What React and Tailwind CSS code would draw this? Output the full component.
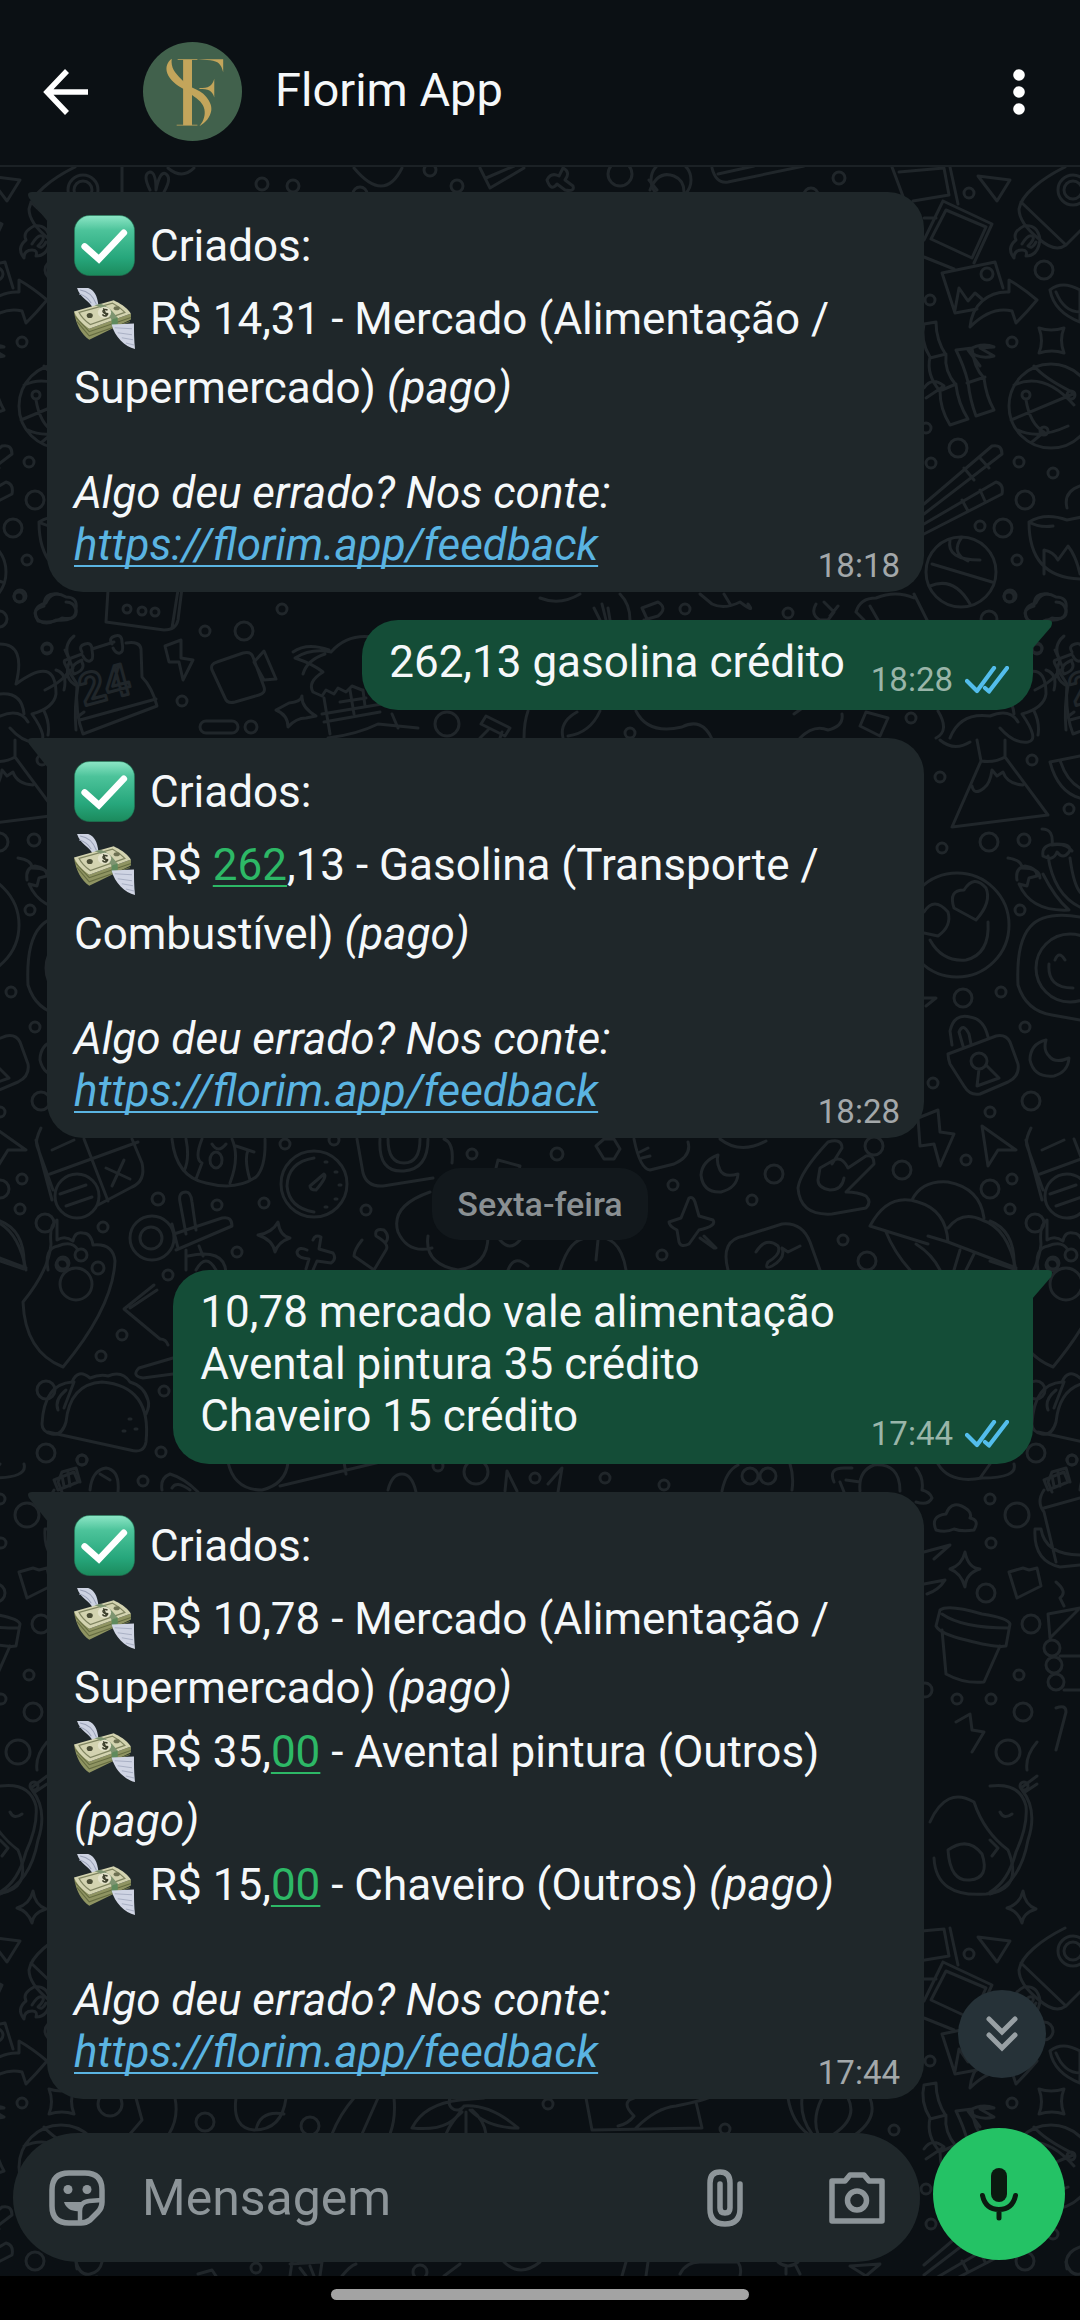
import { useState } from 'react';

// small bubbles scattered over the wallpaper: [x, y, r]
const DOTS = [
  [262, 184, 6], [293, 186, 6], [360, 194, 7], [430, 170, 6], [457, 186, 6], [620, 174, 12], [671, 180, 20], [811, 195, 7], [839, 178, 6],
  [969, 193, 5], [1044, 270, 9], [930, 300, 5], [1012, 342, 5], [926, 428, 5], [958, 448, 9], [931, 463, 5], [1019, 462, 5],
  [1053, 473, 5], [1025, 500, 9], [980, 526, 5], [1003, 528, 9], [1017, 560, 5], [1009, 597, 5], [989, 619, 8], [685, 609, 5],
  [788, 613, 5], [1037, 648, 5], [630, 733, 5], [911, 718, 5], [20, 596, 6], [47, 649, 5], [282, 609, 5], [205, 631, 5],
  [244, 631, 9], [182, 701, 5], [251, 727, 6], [447, 724, 12], [940, 777, 5], [1032, 760, 5], [1069, 809, 5], [989, 842, 9],
  [1024, 840, 6], [942, 848, 5], [1020, 910, 5], [963, 998, 9], [1001, 992, 5], [1025, 1027, 5], [933, 1083, 5], [1031, 1101, 9],
  [990, 1112, 5], [874, 1146, 9], [966, 1160, 5], [902, 1170, 9], [1012, 1179, 5], [990, 1189, 9], [1010, 1209, 5], [1035, 1223, 9],
  [673, 1185, 5], [774, 1174, 9], [752, 1200, 5], [843, 1240, 5], [662, 1255, 5], [867, 1261, 9], [557, 1154, 6],
  [158, 1199, 6], [103, 1227, 5], [217, 1205, 5], [264, 1203, 5], [237, 1252, 5], [285, 1144, 5], [334, 1140, 5], [366, 1210, 5],
  [168, 1275, 5], [472, 1154, 5], [122, 1335, 5], [101, 1356, 5], [164, 1391, 5], [161, 1452, 5], [82, 1460, 5], [143, 1481, 5],
  [46, 1453, 9], [476, 1472, 12], [438, 1466, 5], [535, 1478, 5], [605, 1478, 5], [664, 1485, 5], [990, 1499, 5], [1017, 1515, 12],
  [991, 1543, 5], [986, 1593, 9], [1031, 1624, 9], [1019, 1675, 5], [925, 1690, 7], [957, 1699, 5], [991, 1699, 5], [1023, 1712, 9],
  [1036, 1390, 9], [1072, 1460, 5], [1008, 1752, 12], [205, 2122, 9], [310, 2126, 9], [110, 2104, 12], [548, 2104, 5], [725, 2129, 5],
  [894, 2130, 5], [256, 2268, 5], [420, 2272, 7],
];

const DOODLES = [
  // photos
  'M892 167l12 32M899 172l45-4 5 27-36 6M950 167l8 37M924 218h12M943 201l49 23-18 39M924 240l19-39M924 257l30 12M946 210l40 17-14 31-41-19z',
  // framed picture
  'M955 313l-13-40 53-11 8 26M955 313l22-4M955 310l4-22 9 13 7-8 7 6M981 274a6 6 0 1 0 12 0a6 6 0 1 0-12 0',
  // curved arrow
  'M970 327c2-22 18-36 39-35v-12q14 8 28 20q-10 12-21 23l-4-12c-16-4-30 4-42 16z',
  // rocket
  'M1065 167c-24 12-44 28-46 42q0 14 20 30q16 14 27 6l46-46V167M1021 202l45 43M1058 190a15 15 0 1 0 30 0a15 15 0 1 0-30 0M1064 190a9 9 0 1 0 18 0a9 9 0 1 0-18 0',
  'M1014 258q-8-10 2-18q-4-8 8-14q14-2 16 14q-2 16-14 16q2-6-4-6q-8 0-8 8M1022 244q6-10 10-8t-4 10q4 4 8-4',
  // paper plane
  'M978 176l32 4-13 21z',
  // coffee bean
  'M1050 290q12-10 30 0v32q-26-10-30-32M1056 292q8 20 24 20',
  // bamboo
  'M924 324l12-2q0 18 10 33q-2 16 10 30q2 18 12 34l-18 6q-10-16-10-34q-14-16-10-34q-10-16-6-33M930 358l16-4M942 390l14-6M956 350q8 16 12 32q2 18 8 34l18-6q-8-14-10-32q-10-10-12-30zM967 383l18-6M968 350q14-8 26-3l-14 1 14 8q-16 4-26-6l12 16M924 388q8-12 20-2l-18 12',
  // four-point stars
  'M1039 328q12 4 25 0q-5 12 0 25q-12-4-25 0q5-12 0-25zM289 703q12-1 13-7q-1 11 14 20l-10 2q-10 0-18 9q0-12-12-17zM965 1552q3 16 15 17q-14 4-15 18q-4-14-15-18q12-4 15-17zM278 1222q2 14 12 16q-12 4-15 14q-2-12-17-17q14-2 20-13zM33 1891q2 14 13 18q-13 4-14 14q-4-12-15-15q13-4 16-17z',
  // ball
  'M1009 406a42 42 0 1 0 84 0a42 42 0 1 0-84 0M1014 385q30-14 60 20M1026 400q4 24 18 32M1011 420l62-26M1034 366q10 12 38 26M1018 430q20 10 50-4M1044 432l-12 10M1022 395a4 4 0 1 0 8 0a4 4 0 1 0-8 0M1040 431a4 4 0 1 0 8 0a4 4 0 1 0-8 0M1067 395a4 4 0 1 0 8 0a4 4 0 1 0-8 0',
  // matches
  'M924 504l68-58q10-2 10 8l-78 60M924 524l72-42q8 2 6 12l-78 40M964 468l10 12M980 458l9 10M962 500l6 11M980 490l5 11',
  // basketball
  'M926 572a35 35 0 1 0 70 0a35 35 0 1 0-70 0M932 564l60 18M950 540q-4 20 30 20M930 586q24-10 40 18M962 537q-12 16 6 24',
  // bowl
  'M1029 522q16-10 38-2l20-4M1029 522q0 56 52 57M1029 522q10 6 24 4M1067 508q-4-16 13-22M1044 574l0-24q10 2 14 10l10-14q8 10 12 28',
  // cloud
  'M1028 621q-8-14 8-18q6-14 20-6q12 0 10 12q2 12-14 9q-10 6-24 3z',
  // chat keyboard
  'M108 590l-2 32 58 8q12 0 14-10l4-32M172 628l6-38M123 609a4 4 0 1 0 8 0a4 4 0 1 0-8 0M138 611a4 4 0 1 0 8 0a4 4 0 1 0-8 0M151 612a4 4 0 1 0 8 0a4 4 0 1 0-8 0',
  // cloud on the left
  'M38 620q-8-10 6-14q0-14 14-12M38 620q8 6 18 0q20 2 20-10q-2-8-10-8M0 644q26 0 16 40q40-30 40 10q-2 14-24 20q18 26 6 28q-14 2-28-14M0 694q22-2 24 20',
  // calendar
  'M66 660l16-6M92 649l22-7M126 643q14-2 15 6l1 28q10 10 15 29l-74 28q-8-20-6-50q-8-12-12-20q-2-4 1-4M80 720l76-21M82 652q-4-6 3-8t7 6q2 10-2 11t-7-5M112 644q-4-6 3-8t7 6q2 10-2 11t-7-5',
  // bolt
  'M165 646l16-6 0 18 12 2-10 20-4-18-10 0z',
  // video camera
  'M212 670q-2-6 5-8l26-9q8-2 10 4l11 30q2 6-5 8l-24 7q-8 2-10-4zM254 662l10-11 12 28-12 1z',
  // hut and palm
  'M313 692q-6-10 10-20q-10-8-28-14q16-10 36-6q18-20 46-14M293 652q14-10 36-2M303 674q4-14 22-20M313 692l9 4 4-6 8 4 4-6 8 4 6-6 10 4M324 698l6 36M324 722l56-10M322 714l60-10M350 690l4 24M340 702l26-4M328 738q30-4 50-14l40 4M392 714l6 14M363 690l2 16',
  // capsule
  'M206 721h26a6 6 0 0 1 0 12h-26a6 6 0 0 1 0-12z',
  // pipe
  'M486 716l24 12-5 8-24-12zM488 730l-8 8M500 738l2-6M524 738q0-16 4-27',
  // mushrooms and ribbons under the first reply
  'M540 598q20 8 40-4M620 594q10 10 10 26M602 604l4 16M608 608l2 12M594 608l6 12M642 608l12 26M642 608l16-6q10 6 0 14l-14 4M700 594l12 10q12 6 28-2q16 12 8 2M730 604l-6-10M816 604q-6 10 4 16l8 0 6-8-10-10M830 616l8-10M856 612q4-14 20-14q20-8 38 0M914 594l14 28M856 612l8 8M870 606l8 14',
  'M563 738q-4-16 14-26M600 711q-10 22-32 25M636 711q12 24 46 16q20-10 30 12M794 714l14-10M800 738q14-14 28-8q16-4 14-16M860 726l6-14 22 6-8 18zM938 711q12 20-2 27M950 738q10-26 40-22q20-8 28 6M1034 711q6 12 4 24M1035 690q20-10 24-20M1055 650l8 18-8 10M1074 712l-8 6',
  // neon blossoms on the right
  'M1064 636q-12 10-4 24q-8 20 8 26q-4 20-2 44M1046 670q12 4 8 20M1072 660q-14 6-8 14q12-4 8-12',
  // volcano
  'M977 740l4 21-29 66 96-12-43-58 0-17M981 761q14 2 24-4M972 786q2 10 12 2q6-4 8-18l5 6 6-4q4 12 20 13',
  // balloon tail
  'M940 740q14 12 30 2M1050 762q8 30 30 36M1060 760q6 20 20 28M1050 762l30-6',
  // cherries
  'M1042 829q12 0 10 16q14-2 20 6M1043 856q-2-12 14-12t12 8q-6 8-12 0q-4 10-14 4M1048 856q6 40 34 52M1070 858q4 30 12 36M1008 858q14 2 14 10q18 0 18 10M1017 880q-2-12 8-14q12 2 12 10l-8 2-2 8-8-2q12 28 50 26q-14-12-26-36',
  // heart-eyes
  'M905 925a52 52 0 1 0 104 0a52 52 0 1 0-104 0M976 920l-22-12q-6-18 10-18q10-16 22-2q6 14-10 32zM924 912q10-16 24 0q4 14-10 24l-14-3M930 940q12 22 36 20q24-6 22-38',
  // smiling blob
  'M1080 917q-36-6-50 10t-12 58q8 26 34 30l28 5M1036 968a34 34 0 1 0 68 0a34 34 0 1 0-68 0M1049 964q-2 24 24 24M1055 960q4-10 10 0',
  // lock
  'M952 1045l-2-14q4-18 20-14q14 2 18 20M963 1046l-4-14q4-10 10 2l2 10M948 1054l48-18q10-2 14 6l8 22q2 12-10 18l-28 12q-10 2-16-8l-14-22q-2-6-2-10M971 1061a8 8 0 1 0 16 0a8 8 0 1 0-16 0M979 1069l-2 17 22-8-12-12',
  // moons
  'M1046 1040q-16 4-16 20q4 18 24 16q14-4 15-18q-14 6-20-2q-6-6-3-16zM718 1155q-16 6-17 20q2 18 20 17q16-4 17-18q-14 4-18-4t-2-15z',
  // bolt and cursor
  'M918 1118l20-8 2 22 14 2-14 32-6-22-14 2zM982 1126l34 24-18 0-10 16zM924 998l12 0-10 8',
  // control pad
  'M36 1140l16 60M84 1139l24 62M50 1174l88-32M41 1128q-6 12-4 18l16 44M132 1139l10 24q4 18-10 24l-34 18M106 1168l24 11M124 1160l-12 26M52 1150l22-10M60 1194l26-9M66 1206l26-9M55 1196a22 22 0 1 0 44 0a22 22 0 1 0-44 0',
  // easter egg
  'M172 1139q4 38 34 44q30 8 50-6q10-10 9-38M186 1139q4 20-2 32M202 1139q-8 20 0 24l-6 16M232 1139q8 18-2 44M248 1150q-4 10 2 30M212 1144q6 10 14 0M210 1160a6 8 0 1 0 12 0a6 8 0 1 0-12 0M236 1146l18 6',
  // gauge
  'M281 1184a33 33 0 1 0 66 0a33 33 0 1 0-66 0M314 1158q-26 4-27 28q2 22 27 26M310 1186l14-12q4 2-8 16q-6 0-6-4M325 1162h2M335 1172h2M339 1185h2M335 1199h2M325 1207h2',
  // camera lens
  'M357 1139l6 34q4 14 20 13l50-8M380 1139q-2 34 24 32q24-2 24-32M388 1139q0 24 16 24t16-24M444 1139q10 4 8 24M498 1160l22 6-2 6M498 1160l-2 8',
  // windmill
  'M180 1202q-2-10 6-10q5 0 6 10l4 28M180 1202l6 32M174 1234l48-16q10-2 10 8l-56 24M130 1238a22 22 0 1 1 44 0a22 22 0 1 1-44 0M140 1238a11 11 0 1 0 22 0a11 11 0 1 0-22 0M172 1224l6 24M199 1246l4 10M186 1250v20M188 1256q36-8 38 16M196 1270q10-18 20 0',
  // paw and shield
  'M57 1220q-8 4-6 24q-2 26-28 58q2 50 40 65q50-60 52-106q-2-18-22-16q-2-12-10-12q-8-2-10 8q-8-6-16-1zM57 1263a6 6 0 1 0 12 0a6 6 0 1 0-12 0M75 1255a6 6 0 1 0 12 0a6 6 0 1 0-12 0M92 1268a6 6 0 1 0 12 0a6 6 0 1 0-12 0M60 1284a16 16 0 1 0 32 0a16 16 0 1 0-32 0M0 1221q26 10 24 48l-24-8',
  // cup
  'M154 1285l-30 24 36 30q6 0 8 6M130 1308l27-18M173 1358l-34 10q-8 8 4 10l30-4',
  // taco
  'M48 1432l82 18q14 4 16-8q6-56-44-60q-32 2-36 40q-4 14-14 12q-10-2-10-10q2-40 30-42q6-14 18-4q10-4 18-2q14-6 22 6q14 4 18 18q2 6-2 14M66 1390q-12 10-8 20M74 1382l-10 26M129 1419h2M135 1429h2M123 1431h2',
  // plus, bottle and fan near the date
  'M313 1240q2-6 8-3l-2 12 14 4q4 6-2 10l-14-2-4 9M297 1252q2-6 10-2M297 1252q0 6 12 7l-3 10M362 1240q-8 10-8 16l20 14 12-20q4-6-10-14q-2-8 8-6q6 6 2 12M430 1192q-40 14-32 40q10 22 34 16M428 1236q-4 28 30 34q30-4 30-34M508 1270q6-16 20-4M560 1270q10-34 30-32q30-6 36 32M500 1240q10 12 20 0M598 1240l-2 20',
  // pin and tag
  'M669 1222l12-4 8-20q4-2 6 4l4 14 14 4q4 6-14 10l-10 14q-8 4-10-2l-2-12q-8-4-8-8zM704 1236l12 12-2 0-14-10M728 1270q-8-30 16-34l38-12q20-2 28 18l10 28M756 1252q10-16 22-6q4 8-10 16q-4 8 4 4q14-8 10-18l6 4 12-6',
  'M634 1139q6 30 16 31l24-6q18-8 14-22M640 1152l8-4M642 1158l8-2M596 1146l8-7h10l6 10-6 10h-10zM720 1139q20 16 46 2',
  // rocking hand
  'M828 1142q-28 30-30 46q2 28 34 26l34-6q6-6 0-12q-8-4-20-4l28-28q0-10-8-8l-18 12q-6-12-14-8l-14 8-2 12q0 8 12 10q12 0 14-12M828 1142q14-4 14 6l-10 16',
  // parasols
  'M870 1226q18-34 48-24q28 8 30 40l-20-6M870 1226l58 18M912 1200q10-20 36-18q32 6 36 36M948 1228q14-18 34-8q26 8 34 50M886 1232q8 20 24 38M916 1244q16 10 24 26M948 1242l68 26M960 1250l-6 20M974 1254l-8 16',
  'M1038 1270q-4-22 10-24q14-6 20 4M1046 1265a6 6 0 1 0 12 0a6 6 0 1 0-12 0',
  // second row of trinkets
  'M62 1472l14-4 4 14M62 1472l-4 10 4 10M68 1472l2 14M90 1490q2-20 16-22q14 2 12 24M100 1474l10 6M162 1490q-2-12 8-16q14 4 28 18M172 1488q4-8 18 2M228 1462q6 28 34 28q24-6 26-28M280 1486l100-24M344 1462l2 12M388 1490q4-16 14-16t14 18M505 1491l2-20 10 20M558 1492l4-24-14 16',
  'M722 1491q4-20 16-26M790 1464q4 12 2 26M742 1476a8 8 0 1 0 16 0a8 8 0 1 0-16 0M760 1476a8 8 0 1 0 16 0a8 8 0 1 0-16 0M834 1482q-6-14 10-14l8 0M840 1482l4 10M860 1491q-2-20 14-26q26-2 26 26M846 1480l14 2M916 1468q8 10 6 22q8 2 10 8q-4 8-16 4M938 1464q12 20 44 14q36 0 32-14M980 1478l10-14',
  // small cloud, bottle, banana
  'M936 1530q-6-14 10-16q6-16 22-4q4 4 2 8q10 2 4 12q-12 2-20-1q-8 4-18 1zM924 1552l26-7-16 14M924 1584l21-4q-6 10-18 14M1044 1480l20-8 4 10-20 8zM1044 1490q-8 12 0 22l12 50M1052 1476l2 10M1044 1508l36-10M1035 1529h6q4 26 40 26M1035 1529q-2 32 25 38l20-2M1009 1572l14-4 6 2 8-2 4 18-24 12z',
  // flower pot
  'M940 1610q8-6 42 4q26 4 28 10l-4 22q-10 2-40-6q-26-6-30-14zM942 1630l4 44q18 10 38 8l16-36M942 1614q20 14 66 14',
  // crate and logs
  'M1048 1614l32-6-30 30zM1044 1648a8 8 0 1 0 16 0a8 8 0 1 0-16 0M1046 1665a8 8 0 1 0 16 0a8 8 0 1 0-16 0M1048 1682a8 8 0 1 0 16 0a8 8 0 1 0-16 0M1060 1656h20M1064 1690h16M1056 1582q12 10 4 16l4 8M1056 1708q10-4 10 4l-10 38M956 1722l14-8 2 16 12 2-12 20',
  // sleepy pear on both edges
  'M0 1786q30-4 36 20q2 20-10 46q-8 30-26 40M32 1790q16 20 6 50q-8 44-38 54M10 1812q4 8 12 2M47 1776l-16 12M47 1784l-12 8M30 1786a4 4 0 1 0 8 0a4 4 0 1 0-8 0M47 1742q-12 14-10 28M0 1840l8 8-6 8',
  'M930 1822q16-36 44-20q10 30 34 48q16 40-22 44q-50 4-52-36M948 1850q20-14 34 4q8 24-12 26t-22-30',
  // stripes
  'M136 2098l6 22-12 14M175 2098q4 20-6 36M236 2098q-4 30 18 32q28 0 32-32M256 2130q4-20 28-16M354 2098q-14 16-22 36M378 2098l-16 36M394 2098q2 20-4 36M412 2128q12-24 48-28l24-2M412 2128q40 4 50-20M464 2098a8 8 0 1 0 0 8q26-2 54 22q-30 0-48-18M462 2112q-10 8-16 22M466 2112l0 22M472 2110q12 10 14 24',
  'M586 2098l6 32 110-2-6-26M634 2098q-14 4 0 18q-6 8-16 10M636 2128q20-20 40-22q30-6 36-10M788 2098q4 24 20 36M802 2098q-2 20 10 36M822 2098q-10 20-4 36M848 2098q10 20-14 36M870 2098q8 20-14 36',
  // bottom strip
  'M290 2276l2-14M290 2264l32-2-2 14M300 2268l6 8M310 2266l4 10M198 2274l14-4 4 6M76 2262q4 14 14 12t12-12M342 2276q8-10 14-12M622 2276l4-14M646 2276l2-14M680 2274q6-12 20-12h38q4 6 2 14M778 2262q10 8 20 0M786 2268v6M796 2266l4 8M850 2266l30-2-14 12zM444 2276l16-12M504 2262q16 16 36 0',
  // top strip
  'M150 190q-8-16 0-18q6 0 6 18q4-20 10-16q6 4-2 18M168 168q14 12 26 0M354 168q30 36 48 0M480 168l10 20 34-20M486 178l28-12M547 180q4-8 12-4l4-8q8 4 2 12l8 6q2 6-8 4l-8-6q-6 8-10-4zM649 180l8 10M650 190q8-20 24-14q10 4 10 16M712 168q4 16 16 14l76-16M718 174l36-8',
];

function Wallpaper() {
  const tiles = [
    [0, 0], [-990, 0], [990, 0],
    [0, 1761], [-990, 1761], [990, 1761],
  ];

  return (
    <svg className="absolute inset-0 h-full w-full" aria-hidden="true">
      <defs>
        <g id="doodles" fill="none" stroke="#20262a" strokeWidth="3" strokeLinecap="round" strokeLinejoin="round">
          {DOODLES.map((d, i) => <path key={i} d={d} />)}
          {DOTS.map(([x, y, r]) => <circle key={`${x}-${y}`} cx={x} cy={y} r={r} />)}
          <text x="84" y="706" fontSize="44" fontWeight="700" fontFamily="Roboto" transform="rotate(-15 84 706)">24</text>
        </g>
      </defs>
      <g transform="translate(0 -167)">
        {tiles.map(([x, y]) => <use key={`${x}/${y}`} href="#doodles" x={x} y={y} />)}
      </g>
    </svg>
  );
}

function Logo() {
  return (
    <svg viewBox="0 0 100 100" className="size-[99px] shrink-0" role="img" aria-label="Florim App">
      <circle cx="50" cy="50" r="50" fill="#41614c" />
      <g fill="#c3a55b">
        <path d="M40.500 18H49.500V84H40.500z" />
        <path d="M35 17.500h20v0.800H35zM34 83.500h21v0.800H34z" />
        <path d="M55 17.500h26v13c-2-8-5-11-13-12z" />
        <path d="M57 46.500c9 0 13-2 15-9.500v19c-2-7-6-8.500-15-8.500z" />
        <path d="M29 17c-1 9 3 14 10 21 4 4 7 6 10.500 8 6 3 11 5 14 9 4 5 6 9 5.500 14-1 7-6 13-12 16 5-6 6-12 5-17-1-6-6-10-12.500-14.500-4-3-6-4-8.500-6-7-4-14-9-16.500-16-2-6 0-11 4.500-14.500z" />
      </g>
    </svg>
  );
}

function CheckEmoji() {
  return (
    <svg viewBox="0 0 60 60" className="mr-[15px] inline-block size-[61px] align-[-15px]" role="img" aria-label="Feito">
      <defs>
        <linearGradient id="check-fill" x1="0" y1="0" x2="0" y2="1">
          <stop offset="0" stopColor="#8de6c6" />
          <stop offset="0.250" stopColor="#4cc39a" />
          <stop offset="0.700" stopColor="#27a77c" />
          <stop offset="1" stopColor="#1b8a5c" />
        </linearGradient>
      </defs>
      <rect x="0.500" y="0.500" width="59" height="59" rx="15" fill="url(#check-fill)" stroke="#1d7f58" strokeOpacity="0.500" />
      <path d="M10.500 31l14 12.500L49 17.500" fill="none" stroke="#fff" strokeWidth="6.500" strokeLinecap="round" strokeLinejoin="miter" />
    </svg>
  );
}

function MoneyEmoji() {
  return (
    <svg viewBox="0 0 60 60" className="mr-[15px] inline-block size-[61px] align-[-15px]" role="img" aria-label="Dinheiro">
      <path d="M3 0h11c6 2 9 8 10 17l-6 2C16 13 6 10 3 0z" fill="#cdd3e2" />
      <path d="M6 2c8 1 13 6 16 14M5 6c5 1 9 4 12 9" fill="none" stroke="#9aa2b8" strokeWidth="1" />
      <path d="M0 23l15 17 41-15v6L15 51C7 45 2 36 0 23z" fill="#8f9462" />
      <path d="M1 28l14 15 41-14M3 33l12 14 40-14" fill="none" stroke="#666d42" strokeWidth="1" />
      <path d="M0 23l39-11c6 3 12 6 17 13L15 40C10 36 4 32 0 23z" fill="#d3d3b0" />
      <path d="M5 24l33-9c4 2 8 5 12 9L16 36C12 33 8 30 5 24z" fill="none" stroke="#7f8460" strokeWidth="1.200" />
      <path d="M20 17l6-1.500c7 2 13 8 17 14l-6 2c-4-8-10-13-17-14.500z" fill="#7d9470" />
      <path d="M37 31l6-2v8l-6 1z" fill="#5f8a5c" />
      <ellipse cx="30" cy="24" rx="6.500" ry="5.500" fill="#e4e3cc" />
      <path d="M33 22c-2-2-6 0-4 2s5 0 4 2-4 2-5 0M29 20l3 8" fill="none" stroke="#3c3f2c" strokeWidth="1.400" />
      <ellipse cx="15.500" cy="27" rx="3" ry="2.500" fill="#4a4d36" />
      <ellipse cx="42" cy="20" rx="3" ry="2" fill="#6d7152" />
      <path d="M37 36l22-1c0 8 0 16 1 25-10-2-20-12-23-24z" fill="#d0d5e4" />
      <path d="M40 39l17 1M43 44l14 2M47 49l11 2M51 54l8 2" fill="none" stroke="#a9b0c4" strokeWidth="1" />
    </svg>
  );
}

function DoubleCheck() {
  return (
    <svg viewBox="0 0 44 28" className="h-7 w-11" role="img" aria-label="Lida">
      <path d="M2 15l10 10L29 2M20 22l4 3.500L42 2" fill="none" stroke="#53bdeb" strokeWidth="4.200" strokeLinecap="round" strokeLinejoin="round" />
    </svg>
  );
}

function Phone({ children }) {
  return (
    <a href={`tel:${children}`} className="text-[#2db866] underline decoration-2 underline-offset-[5px]">{children}</a>
  );
}

function Entry({ oneLine, children }) {
  return (
    <p className={oneLine ? 'pb-[10px] leading-[69px]' : 'leading-[69px]'}>
      <MoneyEmoji />
      {children} <em>(pago)</em>
    </p>
  );
}

function Reply({ children, time }) {
  return (
    <article className="relative mr-[156px] ml-[47px] rounded-[36px] rounded-tl-none bg-[#1f272a] pt-5 pr-6 pl-[27px]">
      <svg viewBox="0 0 20 30" className="absolute top-0 -left-[19px] h-[30px] w-5" aria-hidden="true">
        <path d="M20 0H4Q-2 0 1 6L20 30z" fill="#1f272a" />
      </svg>
      <p className="mb-1 h-[69px] leading-[69px]"><CheckEmoji />Criados:</p>
      <div className="space-y-[-5px]">{children}</div>
      <footer className="mt-11">
        <p className="italic leading-[52px]">Algo deu errado? Nos conte:</p>
        <div className="flex items-end justify-between">
          <a href="https://florim.app/feedback" className="pb-[21px] italic leading-[52px] text-[#5ab4e2] underline decoration-2 underline-offset-[5px] [text-decoration-skip-ink:none]">
            https://florim.app/feedback
          </a>
          <time className="pb-[7px] text-[33px] leading-[38px] text-[#a3a8aa]">{time}</time>
        </div>
      </footer>
    </article>
  );
}

function Sent({ lines, time, gap }) {
  return (
    <article className={`relative mr-[47px] flex items-end self-end rounded-[36px] rounded-tr-none bg-[#144d37] pt-4 pr-6 pl-[27px] ${gap}`}>
      <svg viewBox="0 0 20 30" className="absolute top-0 -right-[19px] h-[30px] w-5" aria-hidden="true">
        <path d="M0 0H16Q22 0 19 7L0 29z" fill="#144d37" />
      </svg>
      <div className="pb-[22px] leading-[52px]">
        {lines.map((line) => <p key={line}>{line}</p>)}
      </div>
      <div className="flex items-center gap-3 pb-[11px]">
        <time className="text-[33px] leading-[38px] text-[#99b5a9]">{time}</time>
        <DoubleCheck />
      </div>
    </article>
  );
}

export default function App() {
  const [message, setMessage] = useState('');

  return (
    <div className="flex min-h-screen flex-col bg-[#0b1014] font-[Roboto,sans-serif] text-[44px] text-[#f5f8fa]">
      <header className="flex h-[167px] items-center border-b-2 border-[#1b2125] pt-[18px] pr-9 pl-[43px]">
        <button aria-label="Voltar">
          <svg viewBox="0 0 46 46" className="size-[46px]" fill="none" stroke="#fff" strokeWidth="5.500">
            <path d="M45 23H5M24 2L4 23 24 44" />
          </svg>
        </button>
        <div className="ml-[54px] flex flex-1 items-center gap-[33px]">
          <Logo />
          <h1 className="pb-1 text-[47px] leading-[56px]">Florim App</h1>
        </div>
        <button aria-label="Mais opções">
          <svg viewBox="0 0 50 50" className="size-[50px]" fill="#fff">
            <circle cx="25" cy="8" r="5.800" />
            <circle cx="25" cy="25" r="5.800" />
            <circle cx="25" cy="42" r="5.800" />
          </svg>
        </button>
      </header>

      <main className="relative flex flex-1 flex-col">
        <Wallpaper />

        <section className="relative flex flex-col gap-7 pt-[25px]">
          <Reply time="18:18">
            <Entry>R$ 14,31 - Mercado (Alimentação / Supermercado)</Entry>
          </Reply>
          <Sent time="18:28" gap="gap-[26px]" lines={['262,13 gasolina crédito']} />
          <Reply time="18:28">
            <Entry>R$ <Phone>262</Phone>,13 - Gasolina (Transporte / Combustível)</Entry>
          </Reply>
          <p className="my-0.5 self-center rounded-[28px] bg-[#12181c] px-[25px] text-[34px] leading-[72px] font-medium text-[#8a9093]">
            Sexta-feira
          </p>
          <Sent
            time="17:44"
            gap="gap-9"
            lines={['10,78 mercado vale alimentação', 'Avental pintura 35 crédito', 'Chaveiro 15 crédito']}
          />
          <Reply time="17:44">
            <Entry>R$ 10,78 - Mercado (Alimentação / Supermercado)</Entry>
            <Entry>R$ 35,<Phone>00</Phone> - Avental pintura (Outros)</Entry>
            <Entry oneLine>R$ 15,<Phone>00</Phone> - Chaveiro (Outros)</Entry>
          </Reply>
        </section>

        <form className="relative mt-auto flex items-start gap-[13px] pr-[15px] pb-[14px] pl-[13px]" onSubmit={(e) => e.preventDefault()}>
          <button type="button" aria-label="Ir para o fim" className="absolute right-[34px] bottom-[198px] flex size-[88px] items-center justify-center rounded-full bg-[#263238]">
            <svg viewBox="0 0 34 38" className="h-[38px] w-[34px]" fill="none" stroke="#98a0a4" strokeWidth="5" strokeLinecap="round">
              <path d="M4 4l13 13L30 4M4 20l13 13 13-13" />
            </svg>
          </button>

          <div className="mt-[5px] flex h-[129px] min-w-0 flex-1 items-center rounded-full bg-[#1f272a] pr-[35px] pl-9 text-[#8d9599]">
            <button type="button" aria-label="Figurinhas" className="shrink-0">
              <svg viewBox="0 0 56 56" className="size-14" fill="none" stroke="currentColor" strokeWidth="5.500" strokeLinejoin="round">
                <path d="M20 3h16q17 0 17 17v12q0 6-4 10l-8 8q-4 3-9 3H20Q3 53 3 36V20Q3 3 20 3z" />
                <path d="M31 53V41q0-9 9-10l13-1" strokeWidth="4.500" />
                <circle cx="19" cy="19.500" r="4.500" fill="currentColor" stroke="none" />
                <circle cx="38" cy="19.500" r="4.500" fill="currentColor" stroke="none" />
                <path d="M15 32h24c-4 2-8 5-8 9-7 1-14-2-16-9z" fill="currentColor" stroke="none" />
              </svg>
            </button>
            <input
              value={message}
              onChange={(e) => setMessage(e.target.value)}
              aria-label="Mensagem"
              placeholder="Mensagem"
              className="ml-[37px] min-w-0 flex-1 bg-transparent text-[50px] leading-[60px] outline-none placeholder:text-[#8d9599]"
            />
            <button type="button" aria-label="Anexar" className="shrink-0">
              <svg viewBox="0 0 36 58" className="h-[58px] w-9" fill="none" stroke="currentColor" strokeWidth="5.500" strokeLinecap="round">
                <path d="M33 15v25q0 15-15 15T3 40V14Q3 3 13 3t10 11v25q0 5-5 5t-5-5V15" />
              </svg>
            </button>
            <button type="button" aria-label="Câmera" className="ml-[86px] shrink-0">
              <svg viewBox="0 0 56 52" className="h-[52px] w-14" fill="none" stroke="currentColor" strokeWidth="5.500" strokeLinejoin="round">
                <path d="M3 9h13l5-6h14l5 6h13v40H3z" />
                <circle cx="28" cy="28.500" r="9.500" />
              </svg>
            </button>
          </div>

          <button type="button" aria-label="Gravar áudio" className="flex size-[132px] shrink-0 items-center justify-center rounded-full bg-[#24c265]">
            <svg viewBox="0 0 38 54" className="h-[54px] w-[38px]" fill="none" stroke="#0b1a10" strokeWidth="5" strokeLinecap="round">
              <rect x="11" y="1" width="16" height="34" rx="8" fill="#0b1a10" stroke="none" />
              <path d="M2.500 28.500q3 14 16.500 14t16.500-14M19 43v8" />
            </svg>
          </button>
        </form>
      </main>

      <div className="flex h-11 items-center justify-center bg-black pb-2">
        <span className="h-[11px] w-[418px] rounded-full bg-[#a3a3a3]" />
      </div>
    </div>
  );
}
